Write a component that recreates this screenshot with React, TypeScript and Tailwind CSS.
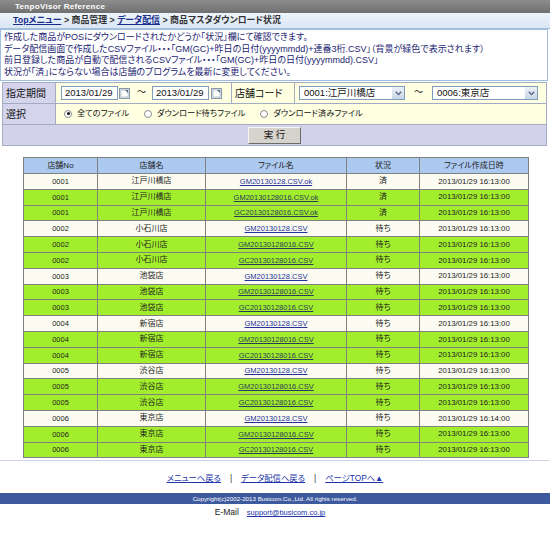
import React from 'react';

type Row = { no: string; name: string; file: string; status: string; date: string; green: boolean };

const shops: [string, string][] = [
  ['0001', '江戸川橋店'],
  ['0002', '小石川店'],
  ['0003', '池袋店'],
  ['0004', '新宿店'],
  ['0005', '渋谷店'],
  ['0006', '東京店'],
];

const rows: Row[] = shops.flatMap(([no, name], i) => {
  const done = i === 0;
  const ext = done ? '.CSV.ok' : '.CSV';
  const status = done ? '済' : '待ち';
  return [
    { no, name, file: 'GM20130128' + ext, status, date: no === '0006' ? '2013/01/29 16:14:00' : '2013/01/29 16:13:00', green: false },
    { no, name, file: 'GM20130128016' + ext, status, date: '2013/01/29 16:13:00', green: true },
    { no, name, file: 'GC20130128016' + ext, status, date: '2013/01/29 16:13:00', green: true },
  ];
});

function CalendarIcon() {
  return (
    <svg width="11" height="11" viewBox="0 0 11 11" className="shrink-0">
      <rect x="0.5" y="0.5" width="10" height="10" fill="#dfe6ee" stroke="#8a98a8" />
      <rect x="2" y="2" width="7" height="7" fill="#ffffff" stroke="#9aa6b4" strokeWidth="0.6" />
      <path d="M6 2 L9 2 L9 5 Z" fill="#5a6a80" />
    </svg>
  );
}

function SelectBox({ value }: { value: string }) {
  return (
    <div className="flex h-[14px] w-[106px] items-stretch border border-[#7f9db9] bg-white">
      <span className="flex-1 pl-[4px] text-[9.5px] leading-[12px] text-[#111]">{value}</span>
      <span className="flex w-[12px] items-center justify-center bg-gradient-to-b from-[#eef2f8] to-[#c8d4e6]">
        <svg width="7" height="5" viewBox="0 0 7 5">
          <path d="M0.8 0.8 L3.5 3.6 L6.2 0.8" fill="none" stroke="#4d6185" strokeWidth="1.3" />
        </svg>
      </span>
    </div>
  );
}

function Radio({ checked, label }: { checked?: boolean; label: string }) {
  return (
    <span className="flex items-center gap-[5px]">
      <span className="flex h-[8px] w-[8px] items-center justify-center rounded-full border border-[#8a8a8a] bg-white">
        {checked && <span className="h-[3px] w-[3px] rounded-full bg-[#111]" />}
      </span>
      <span className="text-[8.2px] text-[#111]">{label}</span>
    </span>
  );
}

export default function App() {
  return (
    <div className="min-h-[534px] w-[550px] bg-white font-['Liberation_Sans','Noto_Sans_CJK_JP',sans-serif] [font-feature-settings:'palt']">
      {/* title bar */}
      <div className="h-[13px] bg-gradient-to-b from-[#8d8d8d] to-[#707070] pl-[15px] text-[8px] font-bold leading-[13px] tracking-[0.3px] text-white">
        TenpoVisor Reference
      </div>

      {/* breadcrumb */}
      <div className="h-[16px] border-b border-[#a6c0dc] bg-gradient-to-b from-[#eef4fa] to-[#d9e6f4] pl-[13px] text-[8.9px] font-bold leading-[15px] text-[#333]">
        <a className="text-[#1a2d8c] underline">Topメニュー</a> &gt; 商品管理 &gt; <a className="text-[#1a2d8c] underline">データ配信</a> &gt; 商品マスタダウンロード状況
      </div>

      <div className="border-b border-[#ccd6e2] pb-[2px]">
        {/* description */}
        <div className="w-[548px] border border-[#9fbddc] px-[3px] py-[2px] text-[9px] leading-[11.5px] text-[#1c2472]">
          <p>作成した商品がPOSにダウンロードされたかどうか「状況」欄にて確認できます。</p>
          <p>データ配信画面で作成したCSVファイル・・・「GM(GC)+昨日の日付(yyyymmdd)+連番3桁.CSV」（背景が緑色で表示されます）</p>
          <p>前日登録した商品が自動で配信されるCSVファイル・・・「GM(GC)+昨日の日付(yyyymmdd).CSV」</p>
          <p>状況が「済」にならない場合は店舗のプログラムを最新に変更してください。</p>
        </div>

        {/* search form */}
        <div className="ml-[2px] mt-[1px] w-[545px] border border-[#a4acc4] bg-[#a4acc4]">
          <div className="flex h-[20px]">
            <div className="flex w-[52px] items-center bg-[#d4d4ec] pl-[3px] text-[10px] text-[#111]">指定期間</div>
            <div className="ml-[1px] flex w-[175px] items-center bg-[#ffffe2] pl-[5px]">
              <div className="h-[14px] w-[57px] border border-[#7f9db9] bg-white pl-[3px] text-[9.5px] leading-[12px] text-[#111]">2013/01/29</div>
              <span className="ml-[1px]"><CalendarIcon /></span>
              <span className="ml-[7px] w-[14px] text-[9px] text-[#111]">〜</span>
              <div className="ml-[1px] h-[14px] w-[57px] border border-[#7f9db9] bg-white pl-[3px] text-[9.5px] leading-[12px] text-[#111]">2013/01/29</div>
              <span className="ml-[2px]"><CalendarIcon /></span>
            </div>
            <div className="ml-[1px] flex w-[62px] items-center bg-[#ffffe2] pl-[3px] text-[10px] text-[#111]">店舗コード</div>
            <div className="ml-[1px] flex flex-1 items-center bg-[#ffffe2] pl-[4px]">
              <SelectBox value="0001:江戸川橋店" />
              <span className="ml-[9px] w-[18px] text-[9px] text-[#111]">〜</span>
              <SelectBox value="0006:東京店" />
            </div>
          </div>
          <div className="mt-[1px] flex h-[20px]">
            <div className="flex w-[52px] items-center bg-[#d4d4ec] pl-[3px] text-[10px] text-[#111]">選択</div>
            <div className="ml-[1px] flex flex-1 items-center gap-[15px] bg-[#ffffe2] pl-[8px]">
              <Radio checked label="全てのファイル" />
              <Radio label="ダウンロード待ちファイル" />
              <Radio label="ダウンロード済みファイル" />
            </div>
          </div>
          <div className="mt-[1px] flex h-[20px] items-center justify-center bg-[#d2d2ea]">
            <button className="h-[17px] w-[53px] border border-t-[#f4f4f4] border-l-[#f4f4f4] border-r-[#6a6a6a] border-b-[#6a6a6a] bg-[#d6d3cc] text-[9.5px] leading-[14px] text-[#111]">
              実 行
            </button>
          </div>
        </div>

        {/* result table */}
        <table className="ml-[23px] mt-[11px] w-[505px] table-fixed border-collapse border border-[#666] text-center text-[8px] text-[#222]">
          <colgroup>
            <col className="w-[74px]" />
            <col className="w-[108px]" />
            <col className="w-[141px]" />
            <col className="w-[73px]" />
            <col className="w-[109px]" />
          </colgroup>
          <thead>
            <tr className="h-[16px] bg-[#acc9f0]">
              {['店舗No', '店舗名', 'ファイル名', '状況', 'ファイル作成日時'].map((h) => (
                <th key={h} className="border border-[#808080] p-0 font-normal">{h}</th>
              ))}
            </tr>
          </thead>
          <tbody>
            {rows.map((r, i) => (
              <tr key={i} className={'h-[15.8px] ' + (r.green ? 'bg-[#a2ee2c]' : 'bg-[#fbfbf1]')}>
                <td className="border border-[#808080] p-0 text-[7.5px]">{r.no}</td>
                <td className="border border-[#808080] p-0">{r.name}</td>
                <td className="border border-[#808080] p-0 text-[7.5px]">
                  <a className={'underline ' + (r.green ? 'text-[#2a3a5a]' : 'text-[#25309a]')}>{r.file}</a>
                </td>
                <td className="border border-[#808080] p-0">{r.status}</td>
                <td className="border border-[#808080] p-0 text-[7.8px]">{r.date}</td>
              </tr>
            ))}
          </tbody>
        </table>
      </div>

      {/* footer */}
      <div className="mt-[11px] flex h-[12px] items-center justify-center gap-[9px] text-[8.3px] text-[#333]">
        <a className="text-[#2233aa] underline">メニューへ戻る</a>
        <span>|</span>
        <a className="text-[#2233aa] underline">データ配信へ戻る</a>
        <span>|</span>
        <a className="text-[#2233aa] underline">ページTOPへ▲</a>
      </div>
      <div className="mt-[9px] h-[11px] bg-[#3d5a9e] text-center text-[6.2px] leading-[11px] text-white">
        Copyright(c)2002-2013 Busicom.Co.,Ltd. All rights reserved.
      </div>
      <div className="mt-[2px] flex h-[13px] items-center justify-center gap-[8px] pr-[10px]">
        <span className="text-[8.5px] text-[#222]">E-Mail</span>
        <a className="text-[7.5px] text-[#2233aa] underline">support@busicom.co.jp</a>
      </div>
    </div>
  );
}
